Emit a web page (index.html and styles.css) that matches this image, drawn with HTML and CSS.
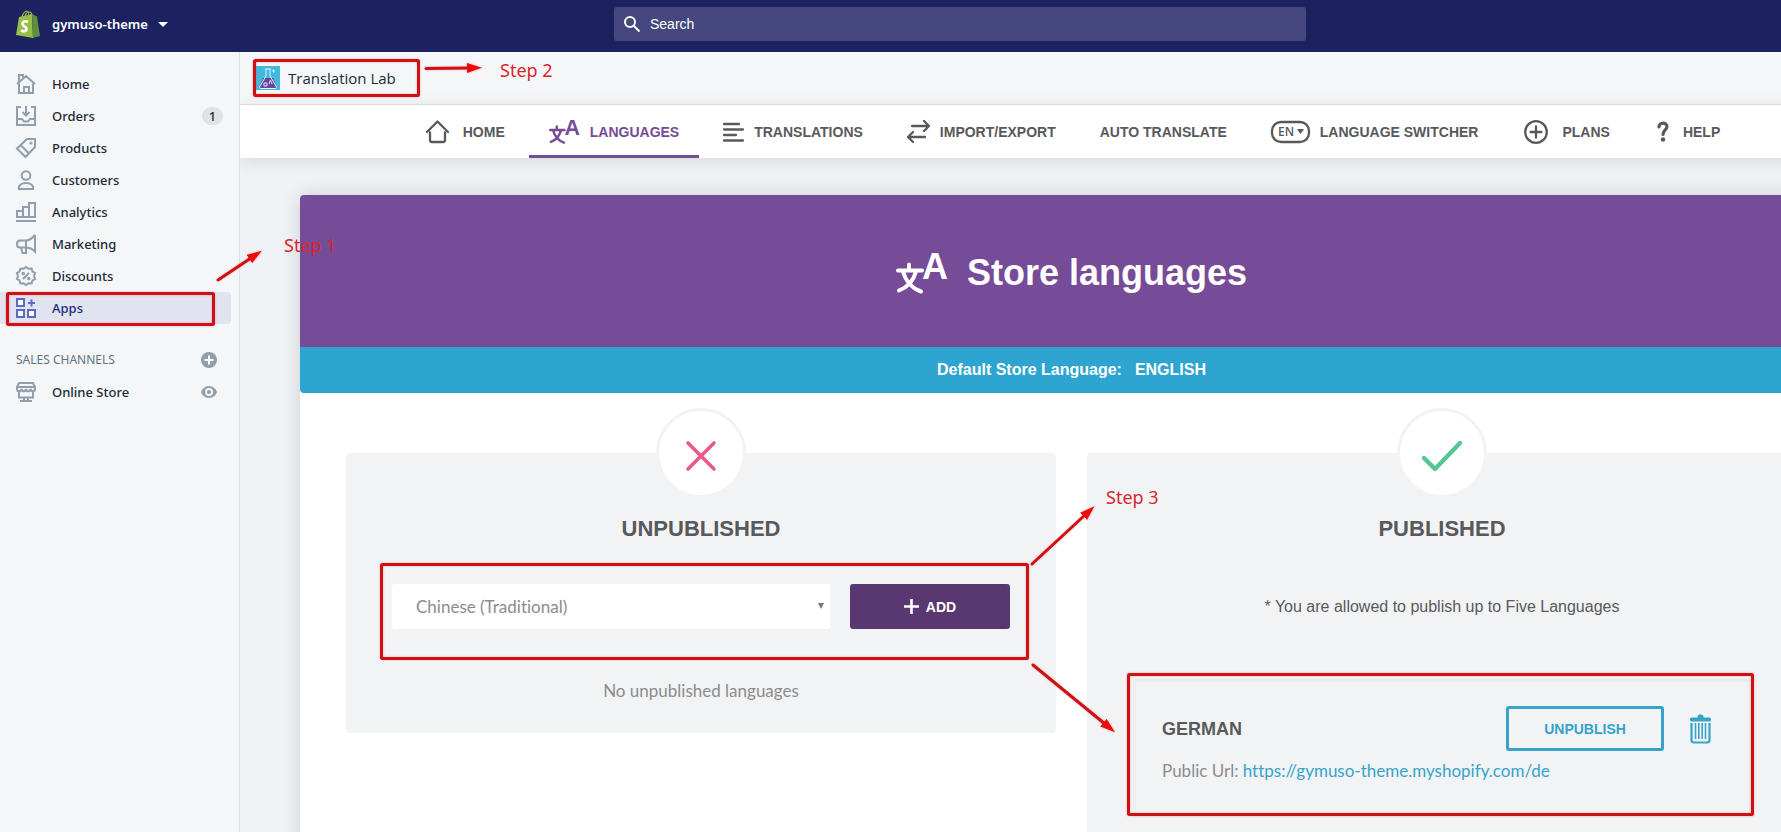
FILE: index.html
```html
<!DOCTYPE html>
<html lang="en">
<head>
<meta charset="utf-8">
<title>Translation Lab - Store languages</title>
<link rel="stylesheet" href="styles.css">
</head>
<body>
<div class="shell">
  <header class="topbar">
    <button class="store" type="button">
      <svg class="logo" viewBox="0 0 24 28" aria-hidden="true">
        <path d="M6 8c0-4 3-7 5-7s2 4 2 6M9 7c0-3 2-5 4-5s3 2 3 4" fill="none" stroke="#95bf47" stroke-width="1.200"/>
        <path d="M3 7l13-3 1 24L0 25z" fill="#95bf47"/>
        <path d="M16 4l2 1 3 1.500L24 26l-7 2z" fill="#5e8e3e"/>
        <path d="M12 12c-3-1.500-5.500-.5-5.500 1.800 0 2.700 4 2.400 4 5.200 0 2.600-3 3-5.500 1.300" fill="none" stroke="#fff" stroke-width="2.600"/>
      </svg>
      <span class="store-name">gymuso-theme</span>
      <svg class="caret" viewBox="0 0 10 5" aria-hidden="true"><path d="M0 0h10L5 5z" fill="#fff"/></svg>
    </button>
    <label class="search">
      <svg viewBox="0 0 16 16" aria-hidden="true"><g fill="none" stroke="#fff" stroke-width="2"><circle cx="6" cy="6" r="5"/><path d="M9.500 9.500l6 6"/></g></svg>
      <input type="search" placeholder="Search" aria-label="Search">
    </label>
  </header>

  <div class="body">
    <aside class="sidebar">
      <nav class="side-nav" aria-label="Admin">
        <a class="side-link" href="#home"><svg viewBox="0 0 20 20"><path d="M3 9.500V19h14V9.500M1 10l9-8 9 8M3 8V1h4v3M8 19v-6h5v6"/></svg><span>Home</span></a>
        <a class="side-link" href="#orders"><svg viewBox="0 0 20 20"><path d="M5 1H1v18h18V1h-4M10 0v9M6.500 6L10 9.500 13.500 6M1 13h5l2 2.500h4L14 13h5"/></svg><span>Orders</span><span class="badge">1</span></a>
        <a class="side-link" href="#products"><svg viewBox="0 0 20 20"><path d="M11 1h8v8L9.500 19 1 10.500zM4.500 7l8.500 8.500"/><circle cx="15" cy="5" r=".6"/></svg><span>Products</span></a>
        <a class="side-link" href="#customers"><svg viewBox="0 0 20 20"><circle cx="10" cy="5.500" r="4.300"/><path d="M3 19h14c1-4-3-6-7-6s-8 2-7 6z"/></svg><span>Customers</span></a>
        <a class="side-link" href="#analytics"><svg viewBox="0 0 20 20"><path d="M0 19h20M1 15V9h6v6zM7 15V5h6v10zM13 15V1h6v14z"/></svg><span>Analytics</span></a>
        <a class="side-link" href="#marketing"><svg viewBox="0 0 20 20"><path d="M19 1v16.500c-3-3-6-4-9-4H4c-4 0-4-7 0-7h6c3 0 6-2 9-5.500M10 6.500V19H6.500L5 13.500"/></svg><span>Marketing</span></a>
        <a class="side-link" href="#discounts"><svg viewBox="0 0 20 20"><path d="M10 1l2.500 1.800 3-.3 1 3 2.500 1.500-1 3 1 3-2.500 1.500-1 3-3-.3L10 19l-2.500-1.800-3 .3-1-3L1 13l1-3-1-3 2.500-1.500 1-3 3 .3zM13 7l-6 6"/><circle cx="7.300" cy="7.500" r=".8"/><circle cx="12.700" cy="12.500" r=".8"/></svg><span>Discounts</span></a>
        <a class="side-link active" href="#apps" aria-current="page"><svg viewBox="0 0 20 20"><path d="M1 1h7v7H1zM1 12h7v7H1zM12 12h7v7h-7zM15.500 1.500v7M12 5h7"/></svg><span>Apps</span></a>
      </nav>
      <div class="side-heading">
        <h2>SALES CHANNELS</h2>
        <button type="button" aria-label="Add sales channel"><svg viewBox="0 0 16 16"><circle cx="8" cy="8" r="8" fill="#919eab"/><path d="M8 3.500v9M3.500 8h9" stroke="#fff" stroke-width="2"/></svg></button>
      </div>
      <a class="side-link" href="#store"><svg viewBox="0 0 20 20"><path d="M3 1h14l2 4v2c0 3-4 3-4.500 0-.5 3-4 3-4.500 0-.5 3-4 3-4.500 0C5 10 1 10 1 7V5zM1 5h18M3 9v6.500h14V9M8 15.500V19M12 15.500V19M4 19h12"/></svg><span>Online Store</span><svg class="eye" viewBox="0 0 16 12"><path d="M8 0c4 0 7 3 8 6-1 3-4 6-8 6S1 9 0 6c1-3 4-6 8-6z" fill="#919eab" stroke="none"/><circle cx="8" cy="6" r="3" fill="#919eab" stroke="#f4f6f8"/></svg></a>
    </aside>

    <main class="main">
      <div class="app-bar">
        <svg class="app-icon" viewBox="0 0 24 24" aria-hidden="true">
          <path d="M0 0h24v24H0z" fill="#43b8de"/>
          <path d="M7 12h10l4 9-1 1H4l-1-1z" fill="#65489a"/>
          <path d="M9 3h6M10 3v7L3.500 21c0 1 .5 1.500 1.500 1.500h14c1 0 1.500-.5 1.500-1.500L14 10V3M16 5h3M17.500 3.500v3" fill="none" stroke="#e4f5fc"/>
          <path d="M8 17h3v3H8zM13 18l1.500-4 1.500 4" fill="none" stroke="#e4d8f2"/>
        </svg>
        <span>Translation Lab</span>
      </div>
      <nav class="tabs" aria-label="Translation Lab">
        <a class="tab wide" href="#tab-home"><svg width="23" height="23" viewBox="0 0 23 23"><path d="M1 12L11.500 1.500 22 12M4 12.500V20q0 2 2 2h11q2 0 2-2v-7.500"/></svg>HOME</a>
        <a class="tab selected" href="#languages" aria-current="page"><svg class="translate" width="31" height="25" viewBox="0 0 52 42" aria-hidden="true"><path d="M2 18.500h24M13 12.500v5M7 19.500c2.500 9 9 17 18 20M20 19.500c-2.500 9-9 16-17 19"/><text x="26" y="27">A</text></svg>LANGUAGES</a>
        <a class="tab" href="#translations"><svg width="21" height="20" viewBox="0 0 21 20"><path d="M1 2h15M1 7.500h19M1 13h12M1 18.500h19"/></svg>TRANSLATIONS</a>
        <a class="tab" href="#import"><svg width="23" height="23" viewBox="0 0 23 23"><path d="M5 6h16.500M17 1l5 5-5 5M18 17H1.500M6 12l-5 5 5 5"/></svg>IMPORT/EXPORT</a>
        <a class="tab" href="#auto">AUTO TRANSLATE</a>
        <a class="tab" href="#switcher"><svg width="39" height="22" viewBox="0 0 39 22"><rect x="1" y="1" width="37" height="20" rx="9"/><path class="solid" d="M26 8h7l-3.500 5z"/><text class="solid" x="7" y="15" font-size="12" font-weight="600" font-family="Open Sans, sans-serif">EN</text></svg>LANGUAGE SWITCHER</a>
        <a class="tab wide trail" href="#plans"><svg width="24" height="24" viewBox="0 0 24 24"><circle cx="12" cy="12" r="10.800"/><path d="M12 6.500v11M6.500 12h11"/></svg>PLANS</a>
        <a class="tab wide trail" href="#help"><svg width="12" height="20" viewBox="0 0 12 20"><path class="hook" d="M2 5c0-5 8-5 8-.5 0 3.500-4 3.500-4 8"/><circle class="solid" cx="6" cy="17.500" r="2.200"/></svg>HELP</a>
      </nav>
      <section class="card">
        <div class="hero">
          <svg class="translate" width="52" height="42" viewBox="0 0 52 42" aria-hidden="true"><path d="M2 18.500h24M13 12.500v5M7 19.500c2.500 9 9 17 18 20M20 19.500c-2.500 9-9 16-17 19"/><text x="26" y="27">A</text></svg>
          <h1>Store languages</h1>
        </div>
        <div class="default-lang"><span>Default Store Language:</span><span>ENGLISH</span></div>
        <div class="columns">
          <section class="panel">
            <div class="medal"><svg width="30" height="30" viewBox="0 0 30 30"><path d="M2 2l26 26M28 2L2 28" stroke="#eb5a86" stroke-width="3.600" stroke-linecap="round"/></svg></div>
            <h2>UNPUBLISHED</h2>
            <form class="add-form">
              <div class="select-wrap">
                <select aria-label="Language"><option>Chinese (Traditional)</option></select>
                <svg viewBox="0 0 6 6" aria-hidden="true"><path d="M0 0h6L3 6z" fill="#777"/></svg>
              </div>
              <button class="add" type="button"><svg width="15" height="15" viewBox="0 0 15 15"><path d="M7.500 0v15M0 7.500h15" stroke="#fff" stroke-width="2.600"/></svg>ADD</button>
            </form>
            <p class="empty">No unpublished languages</p>
          </section>
          <section class="panel tall">
            <div class="medal"><svg width="42" height="32" viewBox="0 0 42 32"><path d="M3 18l11 11L39 3" fill="none" stroke="#55c795" stroke-width="4.400" stroke-linecap="round" stroke-linejoin="round"/></svg></div>
            <h2>PUBLISHED</h2>
            <p class="note">* You are allowed to publish up to Five Languages</p>
            <article class="language">
              <div class="language-row">
                <h3>GERMAN</h3>
                <button class="unpublish" type="button">UNPUBLISH</button>
                <button class="trash" type="button" aria-label="Delete German">
                  <svg width="21" height="30" viewBox="0 0 21 30"><rect x="0" y="3.500" width="21" height="4" rx="1.500" fill="#36a3ca"/><rect x="7.500" y="0.500" width="6" height="5" rx="2.500" fill="#36a3ca"/><g fill="none" stroke="#36a3ca"><path d="M1.500 9v17q0 2.500 2.500 2.500h13q2.500 0 2.500-2.500V9" stroke-width="2.200"/><path d="M5.500 9v16M8.800 9v16M12.200 9v16M15.500 9v16" stroke-width="1.600"/></g></svg>
                </button>
              </div>
              <p>Public Url: <a href="https://gymuso-theme.myshopify.com/de">https://gymuso-theme.myshopify.com/de</a></p>
            </article>
          </section>
        </div>
      </section>
    </main>
  </div>

  <svg class="callouts" width="1781" height="832" viewBox="0 0 1781 832">
    <defs><marker id="tip" markerUnits="userSpaceOnUse" markerWidth="16" markerHeight="12" refX="2" refY="5" orient="auto"><path d="M0 0l15 5-15 5z" fill="#ee0a0a"/></marker></defs>
    <g class="frames">
      <rect x="7.500" y="293.500" width="206" height="31" rx="1"/>
      <rect x="254.500" y="60.500" width="164" height="35" rx="1"/>
      <rect x="381.500" y="564.500" width="646" height="94" rx="1"/>
      <rect x="1128.500" y="674.500" width="624" height="140" rx="1"/>
      <path d="M218 280L251 258" marker-end="url(#tip)"/>
      <path d="M426 68.500L469 68" marker-end="url(#tip)"/>
      <path d="M1032 564L1085 515" marker-end="url(#tip)"/>
      <path d="M1033 665L1105 724" marker-end="url(#tip)"/>
    </g>
    <text x="284" y="252">Step 1</text>
    <text x="500" y="77">Step 2</text>
    <text x="1106" y="504">Step 3</text>
  </svg>
</div>
</body>
</html>
```
FILE: styles.css
```css
* { box-sizing: border-box; }
body {
  margin: 0;
  font-family: "Liberation Sans", Arial, sans-serif;
  font-variant-ligatures: none;
  color: #58595b;
}
h1, h2, h3, p { margin: 0; }
a { color: inherit; text-decoration: none; }
button { border: 0; background: none; padding: 0; font: inherit; color: inherit; cursor: pointer; }
svg { flex: none; display: block; overflow: visible; }

.shell {
  position: relative;
  display: flex;
  flex-direction: column;
  height: 100vh;
  overflow: hidden;
}

/* The admin frame is wider than the window; the surplus runs off the right edge. */
.topbar {
  width: calc(100% + 139px);
  flex: none;
  display: grid;
  grid-template-columns: 1fr 692px 1fr;
  align-items: center;
  padding: 7px 0 11px;
  background: #1c2260;
}
.store { display: flex; align-items: center; padding-left: 16px; color: #fff; }
.logo { width: 24px; height: 28px; }
.store-name { margin: 0 10px 0 12px; font: 600 13px/20px "Noto Sans", sans-serif; }
.caret { width: 10px; height: 5px; }
.search {
  display: flex;
  align-items: center;
  gap: 10px;
  height: 34px;
  padding: 0 10px;
  border-radius: 3px;
  background: #45477e;
}
.search svg { width: 16px; height: 16px; }
.search input {
  flex: 1;
  border: 0;
  padding: 0;
  outline: 0;
  background: none;
  font: 14px/20px "Liberation Sans", sans-serif;
  color: #fff;
}
.search input::placeholder { color: #fff; opacity: 1; }

.body { flex: 1; min-height: 0; display: flex; width: calc(100% + 122px); }
.sidebar {
  flex: none;
  width: 240px;
  padding: 16px 8px 0 0;
  border-right: 1px solid #dfe3e8;
  background: #f4f6f8;
}
.side-link {
  display: flex;
  align-items: center;
  height: 32px;
  padding: 0 8px 0 16px;
  gap: 16px;
  border-radius: 0 3px 3px 0;
  font: 500 13px/20px "Noto Sans", "Open Sans", sans-serif;
  color: #212b36;
}
.side-link svg { width: 20px; height: 20px; fill: none; stroke: #919eab; stroke-width: 2; }
.side-link.active { background: #e1e3f1; color: #202e78; }
.side-link.active svg { stroke: #5c6ac4; fill: #fff; }
.side-link .eye { width: 16px; height: 12px; margin: 0 6px 0 auto; stroke-width: 2; }
.badge {
  margin-left: auto;
  width: 21px;
  border-radius: 9px;
  background: #dfe3e8;
  line-height: 18px;
  text-align: center;
}
.side-heading {
  display: flex;
  justify-content: space-between;
  align-items: center;
  height: 32px;
  margin-top: 20px;
  padding: 0 14px 0 16px;
}
.side-heading h2 { font: 400 12px/16px "Noto Sans", sans-serif; color: #637381; }
.side-heading svg { width: 16px; height: 16px; }

.main { flex: 1; min-width: 0; overflow: hidden; background: #eff3f6; }
.app-bar {
  display: flex;
  align-items: center;
  gap: 8px;
  height: 53px;
  padding: 0 16px;
  border-bottom: 1px solid #dfe1e4;
  background: #f5f6f8;
  font: 400 15px/20px "Open Sans", sans-serif;
  color: #212b36;
}
.app-icon { width: 24px; height: 24px; }
.tabs {
  display: flex;
  justify-content: center;
  gap: 4px;
  height: 53px;
  padding-left: 4px;
  background: #fff;
  box-shadow: 0 3px 18px rgba(0, 0, 0, .11);
}
.tab {
  display: flex;
  align-items: center;
  gap: 10px;
  padding: 3px 20px 0;
  border-bottom: 3px solid transparent;
  font-size: 14px;
  font-weight: 700;
  line-height: 20px;
  white-space: nowrap;
  color: #58595b;
}
.tab.wide { gap: 14px; }
.tab.trail { padding-right: 21px; padding-left: 22px; }
.tab.selected { border-color: #764b97; color: #764b97; }
.tab > svg { fill: none; stroke: currentColor; stroke-width: 2.3; stroke-linecap: round; stroke-linejoin: round; }
.tab .solid { fill: currentColor; stroke: none; }
.tab .hook { stroke-width: 3.2; }
.translate path { fill: none; stroke: currentColor; stroke-width: 4; stroke-linecap: round; stroke-linejoin: round; }
.translate text { font: 700 36px "Liberation Sans", sans-serif; fill: currentColor; stroke: none; }

.card {
  margin: 37px 60px 0;
  min-height: 100%;
  border-radius: 4px;
  background: #fff;
  box-shadow: 0 0 20px rgba(0, 0, 0, .14);
}
.hero {
  display: flex;
  justify-content: center;
  align-items: center;
  gap: 19px;
  height: 152px;
  padding-top: 3px;
  border-radius: 4px 4px 0 0;
  background: #764b97;
  color: #fff;
}
.hero h1 { font-size: 36px; line-height: 44px; }
.default-lang {
  display: flex;
  justify-content: center;
  gap: 13px;
  padding: 13px 0;
  border-radius: 0 0 4px 4px;
  background: #2ea4d1;
  color: #fff;
  font-size: 16px;
  font-weight: 700;
  line-height: 20px;
}
.columns {
  display: grid;
  grid-template-columns: 1fr 1fr;
  align-items: start;
  gap: 31px;
  padding: 60px 46px;
}
.panel {
  display: flex;
  flex-direction: column;
  align-items: center;
  padding: 0 46px 30px;
  border-radius: 4px;
  background: #f2f3f5;
}
.panel.tall { padding-bottom: 120px; }
.medal {
  display: grid;
  place-items: center;
  width: 90px;
  height: 90px;
  margin-top: -45px;
  padding-top: 6px;
  border: 3px solid #f2f3f5;
  border-radius: 50%;
  background: #fff;
}
.panel h2 { margin-top: 19px; font-size: 22px; line-height: 24px; }
.add-form { display: flex; align-self: stretch; gap: 20px; margin-top: 43px; }
.select-wrap { position: relative; flex: 1; }
.select-wrap select {
  appearance: none;
  width: 100%;
  height: 45px;
  padding: 0 24px;
  border: 0;
  border-radius: 3px;
  background: #fff;
  font: 17px/24px Lato, sans-serif;
  font-variant-ligatures: none;
  color: #8c8c8c;
}
.select-wrap svg { position: absolute; right: 6px; top: 19px; width: 6px; height: 6px; }
.add {
  display: flex;
  justify-content: center;
  align-items: center;
  gap: 7px;
  width: 160px;
  height: 45px;
  border-radius: 3px;
  background: #593771;
  color: #fff;
  font-size: 14px;
  font-weight: 700;
}
.empty { margin-top: 50px; font: 17px/24px Lato, sans-serif; font-variant-ligatures: none; color: #8c8c8c; }
.note { margin-top: 54px; font-size: 16px; line-height: 24px; }
.language {
  align-self: stretch;
  margin-top: 60px;
  padding: 24px 37px 32px 26px;
  border: 3px solid #eceef0;
  border-top-color: #e8eaec;
  font: 17px/24px Lato, sans-serif;
  font-variant-ligatures: none;
  color: #8c8c8c;
}
.language-row { display: flex; align-items: center; }
.language h3 { margin-right: auto; font: 700 18px/24px "Liberation Sans", sans-serif; color: #58595b; }
.unpublish {
  width: 158px;
  height: 45px;
  border: 3px solid #36a3ca;
  border-radius: 3px;
  color: #36a3ca;
  font: 700 14px/20px "Liberation Sans", sans-serif;
}
.trash { margin-left: 26px; }
.language p { margin-top: 8px; }
.language a { color: #36a3ca; }

.callouts { position: absolute; left: 0; top: 0; pointer-events: none; }
.frames { fill: none; stroke: #cd1216; stroke-width: 3; stroke-linecap: round; filter: drop-shadow(0 0 1px rgba(255, 60, 60, .4)); }
.callouts text { font: 400 18px "Noto Sans", sans-serif; fill: #d9262a; }
```
